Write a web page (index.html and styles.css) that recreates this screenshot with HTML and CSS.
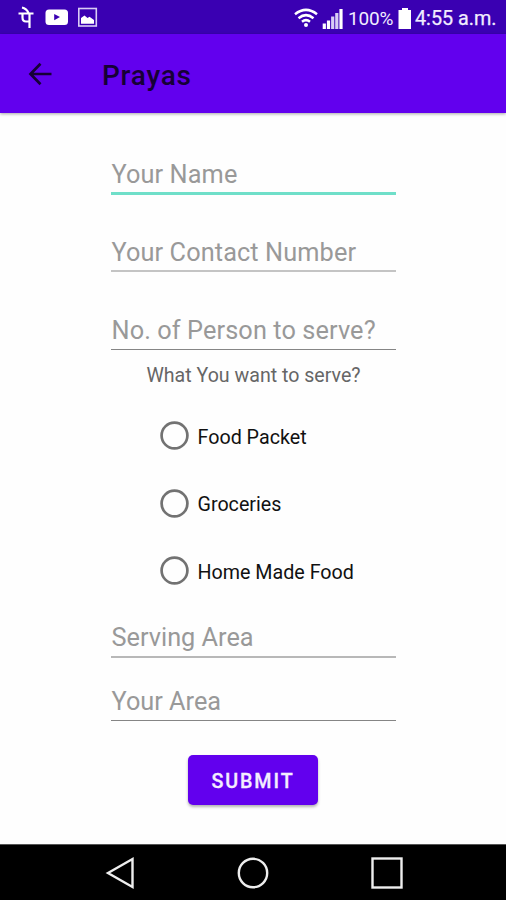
FILE: index.html
```html
<!DOCTYPE html>
<html lang="en">
<head>
<meta charset="utf-8">
<title>Prayas</title>
<link rel="stylesheet" href="styles.css">
</head>
<body>
<div class="screen">
  <header class="status">
    <div class="notices">
      <svg width="80" height="24" viewBox="0 0 80 24" fill="none" stroke="#fff">
        <path d="M.5 8.500H15.500M11.500 8.500V23M4.500 8.500V12.500Q4.500 16.500 8 16.500H11.500M10.500 8Q8.500 3.500 4 2.500" stroke-width="2.200"/>
        <rect x="27.500" y="4.500" width="22.500" height="15.500" rx="3.500" fill="#fff" stroke="none"/>
        <path d="M36.200 9V15.200L42 12.100Z" fill="#3a00b2" stroke="none"/>
        <rect x="60.800" y="3.500" width="17.500" height="17.500" stroke-width="1.600" stroke="#d9ccf5"/>
        <path d="M63 18.800V13L66.500 10.500L69.500 13L71.500 11.800L76 15V18.800Z" fill="#fff" stroke="none"/>
      </svg>
    </div>
    <div class="system">
      <svg class="signals" width="50" height="24" viewBox="0 0 50 24" fill="none" stroke="#fff">
        <path d="M1 8.200Q12 -.5 23 8.200M4.500 12.200Q12 6 19.500 12.200M8 15.800Q12 12.500 16 15.800" stroke-width="2.500"/>
        <circle cx="12" cy="19" r="2" fill="#fff" stroke="none"/>
        <path d="M30.300 17.500V23M34.500 14.500V23" stroke-width="3.200"/>
        <path d="M38.700 10.500V23M42.800 7V23" stroke-width="3.200" stroke="#d8cdf5"/>
        <path d="M47 3V23" stroke-width="3.200"/>
      </svg>
      <span class="percent">100%</span>
      <svg class="battery" width="14" height="21" viewBox="0 0 14 21"><path d="M4 0H10V2H13V21H.5V2H4Z" fill="#fff"/></svg>
      <span class="clock">4:55 a.m.</span>
    </div>
  </header>
  <div class="appbar">
    <svg width="24" height="24" viewBox="0 0 24 24" fill="none" stroke="#160036" stroke-width="2.700"><path d="M23.500 12H3M12.500 1.800L2.500 12L12.500 22.200"/></svg>
    <h1>Prayas</h1>
  </div>
  <main>
    <div class="field focused"><span>Your Name</span></div>
    <div class="field light"><span>Your Contact Number</span></div>
    <div class="field persons"><span>No. of Person to serve?</span></div>
    <p class="question"><span>What You want to serve?</span></p>
    <div class="options">
      <div class="option"><svg width="29" height="29" viewBox="0 0 29 29"><circle cx="14.500" cy="14.500" r="12.900"/></svg><span>Food Packet</span></div>
      <div class="option"><svg width="29" height="29" viewBox="0 0 29 29"><circle cx="14.500" cy="14.500" r="12.900"/></svg><span>Groceries</span></div>
      <div class="option"><svg width="29" height="29" viewBox="0 0 29 29"><circle cx="14.500" cy="14.500" r="12.900"/></svg><span>Home Made Food</span></div>
    </div>
    <div class="field serving"><span>Serving Area</span></div>
    <div class="field area"><span>Your Area</span></div>
    <button class="submit"><span>SUBMIT</span></button>
  </main>
  <nav>
    <svg width="32" height="34" viewBox="0 0 32 34"><path d="M4 17L28.500 3V31Z"/></svg>
    <svg width="34" height="34" viewBox="0 0 34 34"><circle cx="17" cy="17" r="14.200"/></svg>
    <svg width="34" height="34" viewBox="0 0 34 34"><rect x="2.500" y="2.500" width="29" height="29"/></svg>
  </nav>
</div>
</body>
</html>
```
FILE: styles.css
```css
* { box-sizing: border-box; }
body { margin: 0; font-family: Roboto, sans-serif; background: #fefefe; }
svg { display: block; flex: none; }
.screen { width: 506px; height: 900px; display: flex; flex-direction: column; overflow: hidden; }
.status { height: 34px; background: #3a00b2; display: flex; justify-content: space-between; padding: 0 9px 0 18px; color: #f1ecff; white-space: nowrap; }
.notices { padding-top: 5px; }
.system { display: flex; align-items: center; padding-top: 2px; font-size: 20px; }
.signals { margin-top: -1px; }
.percent { width: 46px; margin-left: 4px; font-size: 19px; letter-spacing: -.2px; }
.battery { margin-left: 4px; }
.clock { width: 82px; margin-left: 3px; font-size: 19.8px; letter-spacing: 0; -webkit-text-stroke: .25px; }
.appbar { height: 79px; flex: none; background: #6200ee; display: flex; align-items: center; padding-left: 28px; box-shadow: 0 1px 3px rgba(0,0,0,.35); z-index: 1; }
h1 { margin: 4px 0 0 50px; font-size: 28px; line-height: 34px; font-weight: 500; letter-spacing: .75px; color: #160036; }
main { flex: 1; display: flex; flex-direction: column; padding: 39px 110px 0 111px; }
.field { height: 43px; flex: none; border-bottom: 1.5px solid #858585; font-size: 25.3px; line-height: 46px; letter-spacing: .1px; padding-left: .5px; color: #999; white-space: nowrap; margin-bottom: 35px; width: 285px; }
.persons { height: 42px; margin-bottom: 0; }
.focused { border-bottom: 3px solid #6fdfc9; }
.light { border-bottom: 2px solid #c4c4c4; height: 42px; margin-bottom: 36px; }
.question { margin: 12px 0 0; height: 28px; font-size: 19.6px; line-height: 28px; text-align: center; color: #666; white-space: nowrap; }
.options { margin-top: 12px; padding-left: 49px; }
.option { height: 67.5px; display: flex; align-items: center; font-size: 19.7px; color: #111; white-space: nowrap; }
.option svg { margin-right: 8.5px; fill: none; stroke: #727272; stroke-width: 2.7; }
.option span { padding-top: 3px; }
.serving { margin-top: 10px; height: 43px; border-bottom: 2px solid #b8b8b8; margin-bottom: 21px; letter-spacing: 0; }
.area { height: 42px; margin-bottom: 34px; letter-spacing: 0; }
.submit { align-self: center; width: 130px; height: 50px; flex: none; border: 0; border-radius: 5px; padding: 0; margin-right: 1px; background: #6200ee; color: #f4edff; font: 500 19.7px/50px Roboto, sans-serif; letter-spacing: 1.9px; -webkit-text-stroke: .3px; box-shadow: 0 2px 3px rgba(0,0,0,.3); }
.submit span { display: block; padding-top: 1px; line-height: 51px; }
nav { height: 56px; flex: none; background: #000; border-top: 1px solid #555; display: flex; justify-content: space-between; align-items: center; padding: 0 102px 0 104px; }
nav svg { fill: none; stroke: #eee; stroke-width: 2.4; }
```
